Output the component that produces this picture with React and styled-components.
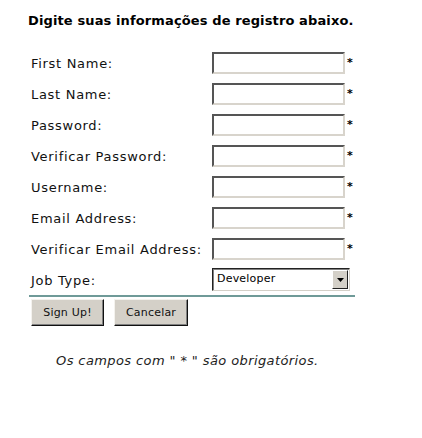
import styled, { createGlobalStyle } from 'styled-components'

const GlobalStyle = createGlobalStyle`
	body {
		margin: 0;
		background: #fff;
		font-family: 'DejaVu Sans', Verdana, sans-serif;
		color: #000;
	}
`

const fields = [
	'First Name:',
	'Last Name:',
	'Password:',
	'Verificar Password:',
	'Username:',
	'Email Address:',
	'Verificar Email Address:',
]

export default function App() {
	return (
		<Page>
			<GlobalStyle />
			<Title>Digite suas informações de registro abaixo.</Title>
			<Form>
				{fields.map((label) => (
					<Row key={label}>
						<Label>{label}</Label>
						<Field>
							<TextBox type={label.includes('Password') ? 'password' : 'text'} />
							<Required>*</Required>
						</Field>
					</Row>
				))}
				<Row>
					<Label>Job Type:</Label>
					<Select>
						<SelectValue>Developer</SelectValue>
						<SelectArrow>
							<svg width="7" height="4" viewBox="0 0 7 4">
								<path d="M0 0h7L3.5 4z" fill="#000" />
							</svg>
						</SelectArrow>
					</Select>
				</Row>
			</Form>
			<Divider />
			<Buttons>
				<Button $w={73}>Sign Up!</Button>
				<Button $w={74}>Cancelar</Button>
			</Buttons>
			<Note>Os campos com " * " são obrigatórios.</Note>
		</Page>
	)
}

const Page = styled.div`
	width: 422px;
	height: 438px;
	padding-top: 13px;
	box-sizing: border-box;
`

const Title = styled.h1`
	margin: 0 0 0 28px;
	font-size: 13px;
	font-weight: bold;
	letter-spacing: 0.12px;
	line-height: 16px;
`

const Form = styled.div`
	display: flex;
	flex-direction: column;
	gap: 8px;
	margin: 22px 0 0 31px;
`

const Row = styled.div`
	display: grid;
	grid-template-columns: 181px auto;
	align-items: center;
	height: 23px;
`

const Label = styled.span`
	font-size: 13px;
	letter-spacing: 0.7px;
	color: #111;
	padding-top: 2px;
`

const Field = styled.div`
	display: flex;
	align-items: center;
`

const TextBox = styled.input`
	box-sizing: border-box;
	width: 133px;
	height: 22px;
	margin: 0;
	padding: 0 3px;
	background: #fff;
	border: 2px solid;
	border-color: #555 #d8d4cc #d8d4cc #555;
	outline: none;
`

const Required = styled.span`
	margin-left: 2px;
	font-size: 11px;
	font-weight: bold;
	line-height: 1;
`

const Select = styled.div`
	box-sizing: border-box;
	display: flex;
	align-items: stretch;
	width: 138px;
	height: 23px;
	background: #fff;
	border: 1px solid;
	border-color: #222 #d4d0c8 #d4d0c8 #222;
	box-shadow: inset 1px 1px 0 #808080;
`

const SelectValue = styled.span`
	flex: 1;
	padding: 3px 0 0 4px;
	font-size: 11px;
	letter-spacing: 0.2px;
`

const SelectArrow = styled.span`
	box-sizing: border-box;
	width: 16px;
	margin: 1px 1px 1px 0;
	display: flex;
	align-items: center;
	justify-content: center;
	background: #d4d0c8;
	border: 1px solid;
	border-color: #fff #222 #222 #fff;
`

const Divider = styled.hr`
	width: 326px;
	margin: 4px 0 0 29px;
	border: 0;
	border-top: 2px solid #6f9a98;
`

const Buttons = styled.div`
	display: flex;
	gap: 10px;
	margin: 2px 0 0 31px;
`

const Button = styled.button`
	box-sizing: border-box;
	width: ${(p) => p.$w}px;
	height: 27px;
	padding: 0;
	font-family: 'DejaVu Sans', Verdana, sans-serif;
	font-size: 11px;
	letter-spacing: 0.2px;
	color: #111;
	background: #d4d0c8;
	border: 1px solid;
	border-color: #f4f2ee #111 #111 #f4f2ee;
	box-shadow: inset -1px -1px 0 #808080;
`

const Note = styled.p`
	margin: 27px 0 0 56px;
	font-size: 13px;
	font-style: italic;
	letter-spacing: 0.4px;
	color: #222;
`
